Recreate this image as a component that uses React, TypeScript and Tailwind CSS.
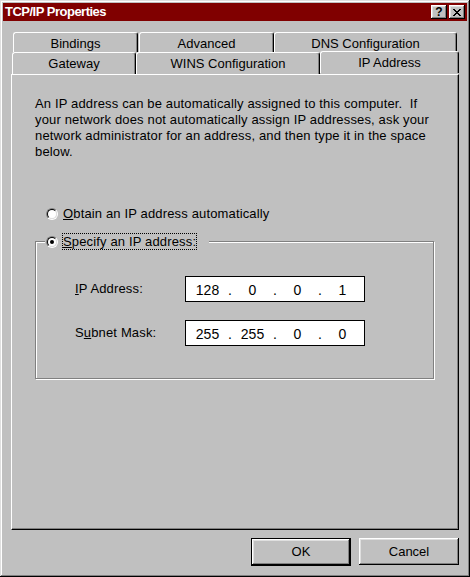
import React from "react";

const raised =
  "shadow-[inset_-1px_-1px_0_#000,inset_1px_1px_0_#fff,inset_-2px_-2px_0_#808080,inset_2px_2px_0_#dfdfdf]";

const Radio = ({ checked }: { checked?: boolean }) => (
  <span className="w-[12px] h-[12px] shrink-0 rounded-full border border-t-[#808080] border-l-[#808080] border-b-white border-r-white">
    <span className="w-full h-full rounded-full border border-t-black border-l-black border-b-[#dfdfdf] border-r-[#dfdfdf] bg-white flex items-center justify-center">
      {checked && <span className="w-[4px] h-[4px] rounded-full bg-black" />}
    </span>
  </span>
);

const IpField = ({ parts }: { parts: string[] }) => (
  <div className="w-[180px] h-[26px] border border-black bg-white flex text-[14px] leading-[22px] pt-[2px] text-black tracking-normal">
    {parts.map((p, i) => (
      <React.Fragment key={i}>
        <span className="w-[43px] text-center">{p}</span>
        {i < 3 && <span className="w-[2px] flex justify-center">.</span>}
      </React.Fragment>
    ))}
  </div>
);

const tab =
  "h-full bg-[#c0c0c0] border-t border-l border-white border-r border-r-black rounded-t-[3px] shadow-[inset_-1px_0_0_#808080] text-center text-[13px] leading-[16px] pt-[3px] text-black";

const App = () => {
  return (
    <div className="w-[470px] h-[577px] bg-[#c0c0c0] p-[3px] font-['Liberation_Sans',Arial,sans-serif] shadow-[inset_-1px_-1px_0_#000,inset_1px_1px_0_#dfdfdf,inset_-2px_-2px_0_#808080,inset_2px_2px_0_#fff]">
      {/* Title bar */}
      <div className="h-[18px] bg-[#800000] flex items-center pl-[2px] pr-[2px]">
        <span className="text-white font-bold text-[13px] leading-none mb-[2px] tracking-[-0.5px]">TCP/IP Properties</span>
        <div className="ml-auto flex gap-[2px]">
          <div className={`w-[16px] h-[14px] bg-[#c0c0c0] flex items-center justify-center text-black font-bold text-[12px] leading-none ${raised}`}>
            ?
          </div>
          <div className={`w-[16px] h-[14px] bg-[#c0c0c0] flex items-center justify-center ${raised}`}>
            <svg width="8" height="7" viewBox="0 0 8 7" shapeRendering="crispEdges">
              <path
                d="M0 0h2v1H0zM6 0h2v1H6zM1 1h2v1H1zM5 1h2v1H5zM2 2h4v1H2zM3 3h2v1H3zM2 4h4v1H2zM1 5h2v1H1zM5 5h2v1H5zM0 6h2v1H0zM6 6h2v1H6z"
                fill="#000"
              />
            </svg>
          </div>
        </div>
      </div>

      {/* Tabs */}
      <div className="mt-[11px] ml-[10px] flex h-[20px]">
        <div className={`${tab} w-[125px]`}>Bindings</div>
        <div className={`${tab} w-[135px] ml-px`}>Advanced</div>
        <div className={`${tab} w-[183px]`}>DNS Configuration</div>
      </div>
      <div className="ml-[9px] flex items-start h-[22px]">
        <div className={`${tab} w-[124px]`}>Gateway</div>
        <div className={`${tab} w-[184px]`}>WINS Configuration</div>
        <div className={`${tab} w-[139px] h-[24px] -mt-px relative z-10`}>IP Address</div>
      </div>

      {/* Panel */}
      <div className="ml-[8px] w-[448px] h-[456px] border-l border-t border-white border-r border-b border-r-black border-b-black shadow-[inset_-1px_-1px_0_#808080] text-[13px] leading-[16px] tracking-[0.15px] text-black">
        <p className="pl-[23px] pt-[21px] whitespace-pre">
          {"An IP address can be automatically assigned to this computer.  If\nyour network does not automatically assign IP addresses, ask your\nnetwork administrator for an address, and then type it in the space\nbelow."}
        </p>

        <div className="mt-[46px] pl-[34px] flex items-center gap-[5px]">
          <Radio />
          <span>
            <span className="underline">O</span>btain an IP address automatically
          </span>
        </div>

        {/* Group box */}
        <div className="mt-[19px] ml-[23px] w-[399px] h-[138px] relative border border-[#808080] shadow-[1px_1px_0_#fff,inset_1px_1px_0_#fff]">
          <div className="absolute left-[9px] top-[-9px] h-[17px] bg-[#c0c0c0] flex items-center gap-[4px] pl-px pr-[12px]">
            <Radio checked />
            <span className="border border-dotted border-black leading-[15px]">
              <span className="underline">S</span>pecify an IP address:
            </span>
          </div>

          <div className="pt-[34px] pl-[39px] flex flex-col gap-[18px]">
            <div className="flex items-center">
              <span className="w-[110px]">
                <span className="underline">I</span>P Address:
              </span>
              <IpField parts={["128", "0", "0", "1"]} />
            </div>
            <div className="flex items-center">
              <span className="w-[110px]">
                S<span className="underline">u</span>bnet Mask:
              </span>
              <IpField parts={["255", "255", "0", "0"]} />
            </div>
          </div>
        </div>
      </div>

      {/* Buttons */}
      <div className="mt-[8px] pr-[8px] flex justify-end gap-[8px] text-[13px] text-black">
        <div className="w-[100px] h-[28px] border border-black">
          <div className={`w-full h-full bg-[#c0c0c0] flex items-center justify-center ${raised}`}>OK</div>
        </div>
        <div className={`w-[100px] h-[27px] bg-[#c0c0c0] flex items-center justify-center ${raised}`}>Cancel</div>
      </div>
    </div>
  );
};

export default App;
